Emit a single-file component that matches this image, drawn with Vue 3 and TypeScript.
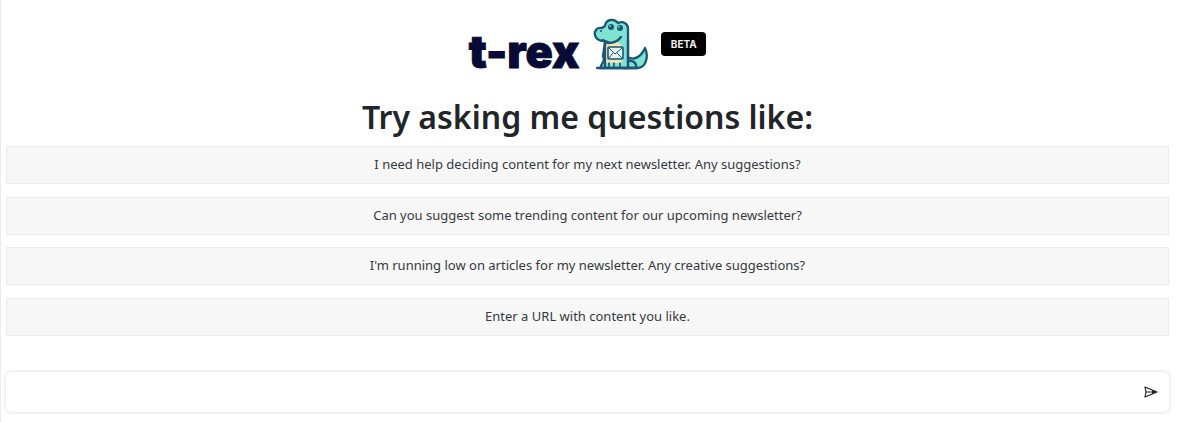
<script setup lang="ts">
import { ref } from 'vue'

const suggestions: string[] = [
  'I need help deciding content for my next newsletter. Any suggestions?',
  'Can you suggest some trending content for our upcoming newsletter?',
  "I'm running low on articles for my newsletter. Any creative suggestions?",
  'Enter a URL with content you like.',
]

const message = ref('')

function choose(text: string): void {
  message.value = text
}

function send(): void {
  message.value = ''
}
</script>

<template>
  <main class="chat">
    <header class="brand">
      <span class="wordmark">t-rex</span>
      <svg class="mascot" viewBox="0 0 54 52" role="img" aria-label="T-rex mascot">
        <g stroke="#1c5674" stroke-width="2.3" stroke-linejoin="round" stroke-linecap="round">
          <path d="M33 38C40 42 47 38 51 29C55 38 52 49 43 49H29Z" fill="#7fe3d2" />
          <path d="M11 23L9 37L10 41L6 49H34V10C34 4 29 2 24 4C20-1 12 0 11 7L8 9C3 8 0 12 1 16C2 21 6 22 10 22L14 23Z" fill="#7fe3d2" />
          <path d="M12 26C15 22 23 21 27 26L29 33L28 44H12L11 36Z" fill="#f4e5b3" stroke="none" />
          <path d="M11 24V48M34 21V48" fill="none" />
          <path d="M20 44V49M26 44V49M15 44V49" fill="none" stroke-width="1.6" />
          <path d="M9 21L14 24C20 24 24 22 27 18" fill="none" />
          <path d="M34 42C39 41 43 44 42 49" fill="none" />
          <path d="M3 49H43" fill="none" />
          <rect x="14" y="28" width="15" height="12" rx="1" fill="#e6f2ee" stroke-width="1.6" />
          <path d="M15 29L21 35L28 29M15 39L19 34M28 39L23 34" fill="none" stroke-width="1" />
        </g>
        <circle cx="17" cy="8" r="3" fill="#1c5674" />
        <circle cx="26" cy="9" r="3" fill="#1c5674" />
        <circle cx="7" cy="12" r="1" fill="#1c5674" />
        <circle cx="16" cy="7" r="1" fill="#75b9c0" />
        <circle cx="25" cy="8" r="1" fill="#75b9c0" />
      </svg>
      <span class="beta">BETA</span>
    </header>

    <h1 class="title">Try asking me questions like:</h1>

    <div class="suggestions">
      <button v-for="text in suggestions" :key="text" class="suggestion" type="button" @click="choose(text)">
        {{ text }}
      </button>
    </div>

    <form class="composer" @submit.prevent="send">
      <input v-model="message" class="field" type="text" aria-label="Message" />
      <button class="send" type="submit" aria-label="Send">
        <svg width="16" height="14" viewBox="0 0 16 14" fill="none" stroke="#222" stroke-linejoin="round">
          <path d="M2 2L14 7L2 12L3 7Z" stroke-width="1.2" />
          <path d="M3 7H13" stroke-width="1" />
          <path d="M9 5L14 7L9 9Z" fill="#222" stroke="none" />
        </svg>
      </button>
    </form>
  </main>
</template>

<style>
body {
  background: #fff;
}
</style>

<style scoped>
.chat {
  box-sizing: border-box;
  min-height: 100vh;
  padding: 16px 24px 9px 5px;
  border-left: 1px solid #ebebeb;
  font-family: "Noto Sans", sans-serif;
  color: #212529;
}
.brand {
  display: flex;
  justify-content: center;
  align-items: flex-start;
  height: 56px;
}
.wordmark {
  margin-top: 12px;
  font-family: Inter, sans-serif;
  font-size: 45px;
  font-weight: 900;
  line-height: 48px;
  color: #070b35;
  -webkit-text-stroke: 1px #070b35;
}
.mascot {
  width: 54px;
  height: 52px;
  margin: 3px 13px 0 15px;
  overflow: visible;
}
.beta {
  width: 45px;
  margin-top: 16px;
  border-radius: 4px;
  background: #000;
  color: #eee;
  font-family: Inter, sans-serif;
  font-size: 10px;
  font-weight: 700;
  line-height: 24px;
  text-align: center;
}
.title {
  margin: 24px 0 8px;
  font-size: 32px;
  font-weight: 600;
  line-height: 42px;
  text-align: center;
}
.suggestions {
  display: flex;
  flex-direction: column;
  justify-content: space-between;
  min-height: 190px;
}
.suggestion {
  height: 38px;
  padding: 0 12px 2px;
  border: 1px solid #ededed;
  background: #f7f7f7;
  color: #363a40;
  font-family: inherit;
  font-size: 13px;
  line-height: 20px;
  cursor: pointer;
}
.composer {
  display: flex;
  align-items: center;
  height: 40px;
  margin-top: 36px;
  border-radius: 5px;
  background: #fff;
  box-shadow: 0 0 4px rgba(0, 0, 0, 0.16);
}
.field {
  flex: 1;
  min-width: 0;
  height: 40px;
  padding: 0 12px;
  border: 0;
  outline: 0;
  background: transparent;
  font: inherit;
  font-size: 13px;
}
.send {
  display: flex;
  padding: 4px;
  margin-right: 6px;
  border: 0;
  background: transparent;
  cursor: pointer;
}
</style>
